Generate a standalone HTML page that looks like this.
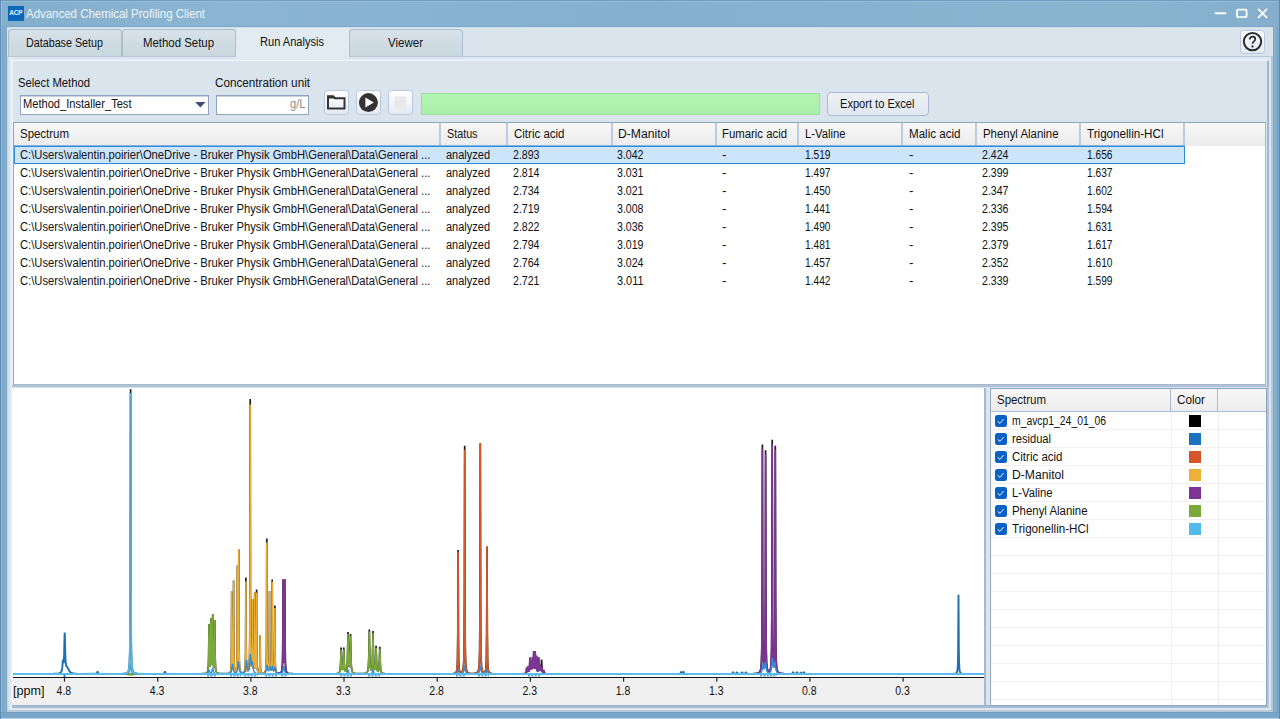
<!DOCTYPE html>
<html><head><meta charset="utf-8"><title>Advanced Chemical Profiling Client</title>
<style>
html,body{margin:0;padding:0;}
body{width:1280px;height:719px;overflow:hidden;position:relative;background:#86afce;font-family:"Liberation Sans", sans-serif;}
.t{position:absolute;white-space:pre;line-height:16px;transform-origin:0 0;font-family:"Liberation Sans", sans-serif;}
</style></head><body>
<div style="position:absolute;left:0px;top:0px;width:1280px;height:719px;background:linear-gradient(90deg,#84afcc 0%,#8bb5d2 18%,#86b1ce 50%,#8ab5d1 88%,#84aecb 100%);"></div>
<div style="position:absolute;left:0px;top:1px;width:1280px;height:1px;background:rgba(255,255,255,0.13);"></div>
<div style="position:absolute;left:0px;top:26px;width:1px;height:693px;background:#5f8eb5;"></div><div style="position:absolute;left:1px;top:26px;width:1px;height:693px;background:#8fb8d3;"></div><div style="position:absolute;left:2px;top:26px;width:1px;height:693px;background:#7ba7c9;"></div><div style="position:absolute;left:3px;top:26px;width:1px;height:693px;background:#7ea9ca;"></div><div style="position:absolute;left:4px;top:26px;width:1px;height:693px;background:#82adcd;"></div><div style="position:absolute;left:5px;top:26px;width:1px;height:693px;background:#86b0ce;"></div><div style="position:absolute;left:6px;top:26px;width:1px;height:693px;background:#7ca4c4;"></div>
<div style="position:absolute;left:1273px;top:26px;width:1px;height:693px;background:#77a4c7;"></div><div style="position:absolute;left:1274px;top:26px;width:1px;height:693px;background:#89b4d0;"></div><div style="position:absolute;left:1275px;top:26px;width:1px;height:693px;background:#88b2cf;"></div><div style="position:absolute;left:1276px;top:26px;width:1px;height:693px;background:#7aa6c9;"></div><div style="position:absolute;left:1277px;top:26px;width:1px;height:693px;background:#7aa6c9;"></div><div style="position:absolute;left:1278px;top:26px;width:1px;height:693px;background:#7ba7c9;"></div><div style="position:absolute;left:1279px;top:26px;width:1px;height:693px;background:#5a88b0;"></div>
<div style="position:absolute;left:0px;top:712px;width:1280px;height:7px;background:linear-gradient(180deg,#6f9cc0 0,#6f9cc0 1px,#7aa6c9 1px,#7aa6c9 5px,#80abcc 5px,#80abcc 6px,#b5cee2 6px,#b5cee2 7px);"></div>
<div style="position:absolute;left:0px;top:0px;width:1280px;height:1px;background:#6f9cc0;"></div>
<div style="position:absolute;left:0px;top:0px;width:1px;height:719px;background:#5f8db5;"></div>
<div style="position:absolute;left:1px;top:1px;width:1px;height:25px;background:#98bdd8;"></div>
<div style="position:absolute;left:1279px;top:0px;width:1px;height:719px;background:#5a88b0;"></div>
<div style="position:absolute;left:8px;top:6px;width:16px;height:15px;background:#0a6ab9;"><span class="t" style="left:1.2px;top:0.7px;font-size:6.5px;line-height:12px;color:#e8f0f8;letter-spacing:-0.2px;font-weight:bold">ACP</span></div>
<span class="t" style="left:26.30px;top:5.87px;font-size:12.5px;color:#eef5fa;transform:scaleX(0.9168);">Advanced Chemical Profiling Client</span>
<svg style="position:absolute;left:1210px;top:4px" width="64" height="20" viewBox="1210 4 64 20"><path d="M1215.5 13.2h10" stroke="#fbfdfe" stroke-width="1.9" stroke-linecap="round"/><rect x="1237" y="9.6" width="9.6" height="7.6" rx="1" fill="none" stroke="#fbfdfe" stroke-width="1.8"/><path d="M1258.6 9.4l8 8M1266.6 9.4l-8 8" stroke="#fbfdfe" stroke-width="1.8" stroke-linecap="round"/></svg>
<div style="position:absolute;left:7px;top:27px;width:1266px;height:685px;background:#dae4ed;"></div>
<div style="position:absolute;left:7px;top:26px;width:1266px;height:1px;background:#7ca7c8;"></div>
<div style="position:absolute;left:7px;top:27px;width:1266px;height:1px;background:#d3e0ea;"></div>
<div style="position:absolute;left:7px;top:56px;width:1266px;height:656px;box-sizing:border-box;background:#dde6ef;border-top:1px solid #b9cad8;border-right:2px solid #b6c8d8;border-bottom:2px solid #b8cad9;border-left:1px solid #c5d5e2;"></div>
<div style="position:absolute;left:8px;top:57px;width:1px;height:653px;background:#d4e0eb;"></div><div style="position:absolute;left:9px;top:57px;width:1px;height:653px;background:#dbe5ee;"></div><div style="position:absolute;left:10px;top:57px;width:1px;height:653px;background:#e2eaf2;"></div><div style="position:absolute;left:11px;top:57px;width:1px;height:653px;background:#e9eff5;"></div>
<div style="position:absolute;left:8px;top:29px;width:114px;height:28px;box-sizing:border-box;border:1px solid #adbdca;border-bottom:1px solid #b8c7d3;border-radius:4px 4px 0 0;background:linear-gradient(180deg,#d7e1e9 0,#d0dce4 50%,#c9d7df 100%);"></div><span class="t" style="left:26.30px;top:35.03px;font-size:12px;color:#111;transform:scaleX(0.8947);">Database Setup</span>
<div style="position:absolute;left:122px;top:29px;width:114px;height:28px;box-sizing:border-box;border:1px solid #adbdca;border-bottom:1px solid #b8c7d3;border-radius:4px 4px 0 0;background:linear-gradient(180deg,#d7e1e9 0,#d0dce4 50%,#c9d7df 100%);"></div><span class="t" style="left:143.30px;top:35.03px;font-size:12px;color:#111;transform:scaleX(0.9502);">Method Setup</span>
<div style="position:absolute;left:349px;top:29px;width:114px;height:28px;box-sizing:border-box;border:1px solid #adbdca;border-bottom:1px solid #b8c7d3;border-radius:4px 4px 0 0;background:linear-gradient(180deg,#d7e1e9 0,#d0dce4 50%,#c9d7df 100%);"></div><span class="t" style="left:388.30px;top:35.03px;font-size:12px;color:#111;transform:scaleX(0.9597);">Viewer</span>
<div style="position:absolute;left:236px;top:28px;width:113px;height:33px;background:#e3ebf2;border-radius:4px 4px 0 0;"></div><span class="t" style="left:260.30px;top:33.63px;font-size:12px;color:#111;transform:scaleX(0.9225);">Run Analysis</span>
<div style="position:absolute;left:1240px;top:29.5px;width:24.5px;height:24.5px;box-sizing:border-box;border:1px solid #b9c8de;border-radius:3.5px;background:linear-gradient(180deg,#fbfcfe,#f0f3f8 45%,#e3e9f2);"></div>
<svg style="position:absolute;left:1240px;top:30px" width="24" height="24" viewBox="0 0 24 24"><circle cx="12.5" cy="11.6" r="8.7" fill="none" stroke="#2b2b2b" stroke-width="2"/><path d="M9.7 9.4c0-1.7 1.2-2.7 2.8-2.7 1.7 0 2.8 1 2.8 2.4 0 1.3-.8 1.9-1.6 2.5-.8.6-1.2 1-1.2 2.2" fill="none" stroke="#2b2b2b" stroke-width="1.7"/><circle cx="12.5" cy="16.4" r="1.1" fill="#2b2b2b"/></svg>
<div style="position:absolute;left:12px;top:60px;width:1257px;height:327px;background:#dae4ed;"></div>
<div style="position:absolute;left:12px;top:59px;width:1255px;height:1px;background:#e4ecf3;"></div>
<div style="position:absolute;left:12px;top:60px;width:1255px;height:1px;background:#f0f4f8;"></div>
<div style="position:absolute;left:12px;top:61px;width:1px;height:324px;background:#eef3f8;"></div>
<div style="position:absolute;left:1267px;top:61px;width:2px;height:326px;background:#9db9d3;"></div>
<span class="t" style="left:18.30px;top:75.03px;font-size:12px;color:#111;transform:scaleX(0.9385);">Select Method</span>
<span class="t" style="left:214.80px;top:75.03px;font-size:12px;color:#111;transform:scaleX(0.9753);">Concentration unit</span>
<div style="position:absolute;left:20px;top:95px;width:188.5px;height:20px;box-sizing:border-box;border:1px solid #8fa3c0;background:#fff;box-shadow:inset 0 1px 0 #c9d3e0;"></div>
<span class="t" style="left:23.30px;top:95.53px;font-size:12px;color:#111;transform:scaleX(0.9241);">Method_Installer_Test</span>
<svg style="position:absolute;left:194px;top:100px" width="13" height="9" viewBox="194 100 13 9"><path d="M195.2 102h10.3l-5.15 5.4z" fill="#3a4f77"/></svg>
<div style="position:absolute;left:216px;top:95px;width:93px;height:20px;box-sizing:border-box;border:1px solid #8fa3c0;background:#fff;box-shadow:inset 0 1px 0 #c9d3e0;"></div>
<span class="t" style="left:289.80px;top:95.53px;font-size:12px;color:#8d8d8d;transform:scaleX(0.9288);">g/L</span>
<div style="position:absolute;left:324px;top:90px;width:24.5px;height:24.5px;box-sizing:border-box;border:1px solid #b9c8de;border-radius:3.5px;background:linear-gradient(180deg,#fdfeff,#f3f6fa 45%,#e5eaf3);"></div>
<div style="position:absolute;left:356px;top:90px;width:24.5px;height:24.5px;box-sizing:border-box;border:1px solid #b9c8de;border-radius:3.5px;background:linear-gradient(180deg,#fdfeff,#f3f6fa 45%,#e5eaf3);"></div>
<div style="position:absolute;left:388px;top:90px;width:24.5px;height:24.5px;box-sizing:border-box;border:1px solid #b9c8de;border-radius:3.5px;background:linear-gradient(180deg,#fdfeff,#f3f6fa 45%,#e5eaf3);"></div>
<svg style="position:absolute;left:324px;top:90px" width="90" height="26" viewBox="324 90 90 26"><path d="M328 108.6V96.6h5.2l1.7 1.7h9.6v10.3z" fill="none" stroke="#333" stroke-width="2" stroke-linejoin="miter"/><path d="M327 95.6h6.6l1.6 1.7v1.2H327z" fill="#333"/><circle cx="368.4" cy="102.6" r="9.5" fill="#333"/><path d="M365.4 97.6l8.4 5-8.4 5z" fill="#fff"/><rect x="394.5" y="96.5" width="11.5" height="12" fill="#e9e9ea"/></svg>
<div style="position:absolute;left:420.5px;top:93px;width:399.5px;height:22px;box-sizing:border-box;border:1px solid #9cdd9e;background:linear-gradient(180deg,#b4f4b4,#a9efa9);"></div>
<div style="position:absolute;left:826.8px;top:92px;width:102px;height:23.5px;box-sizing:border-box;border:1px solid #aab9d2;border-radius:4px;background:linear-gradient(180deg,#eef2f7,#e0e7f1);"></div>
<span class="t" style="left:840.30px;top:95.53px;font-size:12px;color:#111;transform:scaleX(0.9231);">Export to Excel</span>
<div style="position:absolute;left:13px;top:122px;width:1253px;height:263px;box-sizing:border-box;border:1px solid #8fa6c3;border-bottom-color:#a9b6cf;border-right-color:#a5b6cf;background:#fff;"></div>
<div style="position:absolute;left:14px;top:123px;width:1251px;height:22px;background:linear-gradient(180deg,#f7f7f7,#f2f2f2 50%,#ececec);"></div>
<div style="position:absolute;left:14px;top:145px;width:1251px;height:1px;background:#e9edf2;"></div>
<span class="t" style="left:19.80px;top:126.33px;font-size:12px;color:#111;transform:scaleX(0.9541);">Spectrum</span>
<div style="position:absolute;left:439px;top:123px;width:2px;height:22px;background:#bccbdd;"></div>
<span class="t" style="left:446.80px;top:126.33px;font-size:12px;color:#111;transform:scaleX(0.8962);">Status</span>
<div style="position:absolute;left:506px;top:123px;width:2px;height:22px;background:#bccbdd;"></div>
<span class="t" style="left:513.80px;top:126.33px;font-size:12px;color:#111;transform:scaleX(0.9585);">Citric acid</span>
<div style="position:absolute;left:611px;top:123px;width:2px;height:22px;background:#bccbdd;"></div>
<span class="t" style="left:618.30px;top:126.33px;font-size:12px;color:#111;transform:scaleX(1.0125);">D-Manitol</span>
<div style="position:absolute;left:715px;top:123px;width:2px;height:22px;background:#bccbdd;"></div>
<span class="t" style="left:722.30px;top:126.33px;font-size:12px;color:#111;transform:scaleX(0.9463);">Fumaric acid</span>
<div style="position:absolute;left:797px;top:123px;width:2px;height:22px;background:#bccbdd;"></div>
<span class="t" style="left:804.80px;top:126.33px;font-size:12px;color:#111;transform:scaleX(0.9388);">L-Valine</span>
<div style="position:absolute;left:901px;top:123px;width:2px;height:22px;background:#bccbdd;"></div>
<span class="t" style="left:909.30px;top:126.33px;font-size:12px;color:#111;transform:scaleX(0.9652);">Malic acid</span>
<div style="position:absolute;left:975px;top:123px;width:2px;height:22px;background:#bccbdd;"></div>
<span class="t" style="left:982.80px;top:126.33px;font-size:12px;color:#111;transform:scaleX(0.9508);">Phenyl Alanine</span>
<div style="position:absolute;left:1079px;top:123px;width:2px;height:22px;background:#bccbdd;"></div>
<span class="t" style="left:1086.80px;top:126.33px;font-size:12px;color:#111;transform:scaleX(0.9693);">Trigonellin-HCl</span>
<div style="position:absolute;left:1183px;top:123px;width:2px;height:22px;background:#bccbdd;"></div>
<div style="position:absolute;left:14px;top:145px;width:1171px;height:1px;background:#86b4e2;"></div>
<div style="position:absolute;left:14px;top:146px;width:1171px;height:18px;box-sizing:border-box;border:1px solid #2e89d9;background:#cce5fb;"></div>
<span class="t" style="left:19.60px;top:147.23px;font-size:12px;color:#111;transform:scaleX(0.9354);">C:\Users\valentin.poirier\OneDrive - Bruker Physik GmbH\General\Data\General ...</span>
<span class="t" style="left:445.60px;top:147.23px;font-size:12px;color:#111;transform:scaleX(0.9158);">analyzed</span>
<span class="t" style="left:513.00px;top:147.23px;font-size:12px;color:#111;transform:scaleX(0.8824);">2.893</span>
<span class="t" style="left:617.10px;top:147.23px;font-size:12px;color:#111;transform:scaleX(0.8824);">3.042</span>
<span class="t" style="left:722.10px;top:147.23px;font-size:12px;color:#111;transform:scaleX(1.1250);">-</span>
<span class="t" style="left:805.00px;top:147.23px;font-size:12px;color:#111;transform:scaleX(0.8491);">1.519</span>
<span class="t" style="left:909.10px;top:147.23px;font-size:12px;color:#111;transform:scaleX(1.1250);">-</span>
<span class="t" style="left:981.90px;top:147.23px;font-size:12px;color:#111;transform:scaleX(0.8824);">2.424</span>
<span class="t" style="left:1086.50px;top:147.23px;font-size:12px;color:#111;transform:scaleX(0.8491);">1.656</span>
<span class="t" style="left:19.60px;top:165.23px;font-size:12px;color:#111;transform:scaleX(0.9354);">C:\Users\valentin.poirier\OneDrive - Bruker Physik GmbH\General\Data\General ...</span>
<span class="t" style="left:445.60px;top:165.23px;font-size:12px;color:#111;transform:scaleX(0.9158);">analyzed</span>
<span class="t" style="left:513.00px;top:165.23px;font-size:12px;color:#111;transform:scaleX(0.8824);">2.814</span>
<span class="t" style="left:617.10px;top:165.23px;font-size:12px;color:#111;transform:scaleX(0.8824);">3.031</span>
<span class="t" style="left:722.10px;top:165.23px;font-size:12px;color:#111;transform:scaleX(1.1250);">-</span>
<span class="t" style="left:805.00px;top:165.23px;font-size:12px;color:#111;transform:scaleX(0.8491);">1.497</span>
<span class="t" style="left:909.10px;top:165.23px;font-size:12px;color:#111;transform:scaleX(1.1250);">-</span>
<span class="t" style="left:981.90px;top:165.23px;font-size:12px;color:#111;transform:scaleX(0.8824);">2.399</span>
<span class="t" style="left:1086.50px;top:165.23px;font-size:12px;color:#111;transform:scaleX(0.8491);">1.637</span>
<span class="t" style="left:19.60px;top:183.23px;font-size:12px;color:#111;transform:scaleX(0.9354);">C:\Users\valentin.poirier\OneDrive - Bruker Physik GmbH\General\Data\General ...</span>
<span class="t" style="left:445.60px;top:183.23px;font-size:12px;color:#111;transform:scaleX(0.9158);">analyzed</span>
<span class="t" style="left:513.00px;top:183.23px;font-size:12px;color:#111;transform:scaleX(0.8824);">2.734</span>
<span class="t" style="left:617.10px;top:183.23px;font-size:12px;color:#111;transform:scaleX(0.8824);">3.021</span>
<span class="t" style="left:722.10px;top:183.23px;font-size:12px;color:#111;transform:scaleX(1.1250);">-</span>
<span class="t" style="left:805.00px;top:183.23px;font-size:12px;color:#111;transform:scaleX(0.8491);">1.450</span>
<span class="t" style="left:909.10px;top:183.23px;font-size:12px;color:#111;transform:scaleX(1.1250);">-</span>
<span class="t" style="left:981.90px;top:183.23px;font-size:12px;color:#111;transform:scaleX(0.8824);">2.347</span>
<span class="t" style="left:1086.50px;top:183.23px;font-size:12px;color:#111;transform:scaleX(0.8491);">1.602</span>
<span class="t" style="left:19.60px;top:201.23px;font-size:12px;color:#111;transform:scaleX(0.9354);">C:\Users\valentin.poirier\OneDrive - Bruker Physik GmbH\General\Data\General ...</span>
<span class="t" style="left:445.60px;top:201.23px;font-size:12px;color:#111;transform:scaleX(0.9158);">analyzed</span>
<span class="t" style="left:513.00px;top:201.23px;font-size:12px;color:#111;transform:scaleX(0.8824);">2.719</span>
<span class="t" style="left:617.10px;top:201.23px;font-size:12px;color:#111;transform:scaleX(0.8824);">3.008</span>
<span class="t" style="left:722.10px;top:201.23px;font-size:12px;color:#111;transform:scaleX(1.1250);">-</span>
<span class="t" style="left:805.00px;top:201.23px;font-size:12px;color:#111;transform:scaleX(0.8491);">1.441</span>
<span class="t" style="left:909.10px;top:201.23px;font-size:12px;color:#111;transform:scaleX(1.1250);">-</span>
<span class="t" style="left:981.90px;top:201.23px;font-size:12px;color:#111;transform:scaleX(0.8824);">2.336</span>
<span class="t" style="left:1086.50px;top:201.23px;font-size:12px;color:#111;transform:scaleX(0.8491);">1.594</span>
<span class="t" style="left:19.60px;top:219.23px;font-size:12px;color:#111;transform:scaleX(0.9354);">C:\Users\valentin.poirier\OneDrive - Bruker Physik GmbH\General\Data\General ...</span>
<span class="t" style="left:445.60px;top:219.23px;font-size:12px;color:#111;transform:scaleX(0.9158);">analyzed</span>
<span class="t" style="left:513.00px;top:219.23px;font-size:12px;color:#111;transform:scaleX(0.8824);">2.822</span>
<span class="t" style="left:617.10px;top:219.23px;font-size:12px;color:#111;transform:scaleX(0.8824);">3.036</span>
<span class="t" style="left:722.10px;top:219.23px;font-size:12px;color:#111;transform:scaleX(1.1250);">-</span>
<span class="t" style="left:805.00px;top:219.23px;font-size:12px;color:#111;transform:scaleX(0.8491);">1.490</span>
<span class="t" style="left:909.10px;top:219.23px;font-size:12px;color:#111;transform:scaleX(1.1250);">-</span>
<span class="t" style="left:981.90px;top:219.23px;font-size:12px;color:#111;transform:scaleX(0.8824);">2.395</span>
<span class="t" style="left:1086.50px;top:219.23px;font-size:12px;color:#111;transform:scaleX(0.8491);">1.631</span>
<span class="t" style="left:19.60px;top:237.23px;font-size:12px;color:#111;transform:scaleX(0.9354);">C:\Users\valentin.poirier\OneDrive - Bruker Physik GmbH\General\Data\General ...</span>
<span class="t" style="left:445.60px;top:237.23px;font-size:12px;color:#111;transform:scaleX(0.9158);">analyzed</span>
<span class="t" style="left:513.00px;top:237.23px;font-size:12px;color:#111;transform:scaleX(0.8824);">2.794</span>
<span class="t" style="left:617.10px;top:237.23px;font-size:12px;color:#111;transform:scaleX(0.8824);">3.019</span>
<span class="t" style="left:722.10px;top:237.23px;font-size:12px;color:#111;transform:scaleX(1.1250);">-</span>
<span class="t" style="left:805.00px;top:237.23px;font-size:12px;color:#111;transform:scaleX(0.8491);">1.481</span>
<span class="t" style="left:909.10px;top:237.23px;font-size:12px;color:#111;transform:scaleX(1.1250);">-</span>
<span class="t" style="left:981.90px;top:237.23px;font-size:12px;color:#111;transform:scaleX(0.8824);">2.379</span>
<span class="t" style="left:1086.50px;top:237.23px;font-size:12px;color:#111;transform:scaleX(0.8491);">1.617</span>
<span class="t" style="left:19.60px;top:255.23px;font-size:12px;color:#111;transform:scaleX(0.9354);">C:\Users\valentin.poirier\OneDrive - Bruker Physik GmbH\General\Data\General ...</span>
<span class="t" style="left:445.60px;top:255.23px;font-size:12px;color:#111;transform:scaleX(0.9158);">analyzed</span>
<span class="t" style="left:513.00px;top:255.23px;font-size:12px;color:#111;transform:scaleX(0.8824);">2.764</span>
<span class="t" style="left:617.10px;top:255.23px;font-size:12px;color:#111;transform:scaleX(0.8824);">3.024</span>
<span class="t" style="left:722.10px;top:255.23px;font-size:12px;color:#111;transform:scaleX(1.1250);">-</span>
<span class="t" style="left:805.00px;top:255.23px;font-size:12px;color:#111;transform:scaleX(0.8491);">1.457</span>
<span class="t" style="left:909.10px;top:255.23px;font-size:12px;color:#111;transform:scaleX(1.1250);">-</span>
<span class="t" style="left:981.90px;top:255.23px;font-size:12px;color:#111;transform:scaleX(0.8824);">2.352</span>
<span class="t" style="left:1086.50px;top:255.23px;font-size:12px;color:#111;transform:scaleX(0.8491);">1.610</span>
<span class="t" style="left:19.60px;top:273.23px;font-size:12px;color:#111;transform:scaleX(0.9354);">C:\Users\valentin.poirier\OneDrive - Bruker Physik GmbH\General\Data\General ...</span>
<span class="t" style="left:445.60px;top:273.23px;font-size:12px;color:#111;transform:scaleX(0.9158);">analyzed</span>
<span class="t" style="left:513.00px;top:273.23px;font-size:12px;color:#111;transform:scaleX(0.8824);">2.721</span>
<span class="t" style="left:617.10px;top:273.23px;font-size:12px;color:#111;transform:scaleX(0.9094);">3.011</span>
<span class="t" style="left:722.10px;top:273.23px;font-size:12px;color:#111;transform:scaleX(1.1250);">-</span>
<span class="t" style="left:805.00px;top:273.23px;font-size:12px;color:#111;transform:scaleX(0.8491);">1.442</span>
<span class="t" style="left:909.10px;top:273.23px;font-size:12px;color:#111;transform:scaleX(1.1250);">-</span>
<span class="t" style="left:981.90px;top:273.23px;font-size:12px;color:#111;transform:scaleX(0.8824);">2.339</span>
<span class="t" style="left:1086.50px;top:273.23px;font-size:12px;color:#111;transform:scaleX(0.8491);">1.599</span>
<div style="position:absolute;left:12px;top:385px;width:1257px;height:1px;background:#b8c8da;"></div>
<div style="position:absolute;left:12px;top:386px;width:1257px;height:1px;background:#a3bed5;"></div>
<div style="position:absolute;left:12px;top:387px;width:1257px;height:321px;background:#fff;"></div>
<div style="position:absolute;left:12px;top:387px;width:1255px;height:1px;background:#dde7f0;"></div>
<div style="position:absolute;left:13px;top:388px;width:1254px;height:1px;background:#f4f7fa;"></div>
<div style="position:absolute;left:12px;top:388px;width:1px;height:317px;background:#f4f7fa;"></div>
<div style="position:absolute;left:13px;top:388px;width:971px;height:290px;background:#fff;"></div>
<div style="position:absolute;left:13px;top:388px;width:971px;height:1px;background:#f3f6fa;"></div>
<div style="position:absolute;left:13px;top:678px;width:971px;height:27px;background:#f0f0f0;"></div>
<svg style="position:absolute;left:13px;top:388px" width="971" height="317" viewBox="13 388 971 317" font-family="Liberation Sans, sans-serif" font-size="12">
<g fill="none" stroke-linejoin="bevel" stroke-linecap="butt">
<path d="M13.00 674.0L120.10 673.9L123.90 673.6L125.10 673.5L126.10 673.2L126.80 672.9L127.40 672.5L127.90 671.9L128.30 671.1L128.80 669.4L129.10 667.6L129.40 664.4L129.60 660.7L129.90 649.4L130.10 631.1L130.30 583.0L130.60 389.2L130.90 583.0L131.10 631.1L131.30 649.4L131.60 660.7L131.90 665.7L132.20 668.3L132.60 670.3L133.20 671.7L134.00 672.7L135.10 673.2L136.90 673.6L141.20 673.9L141.30 674.0L199.90 673.9L202.80 673.7L204.70 673.6L206.00 673.3L206.80 672.9L207.20 672.4L207.50 672.0L207.90 670.7L208.20 668.7L208.40 665.8L208.70 653.4L209.00 624.0L209.30 652.6L209.50 662.0L209.80 666.0L209.90 666.3L210.00 666.2L210.20 664.8L210.40 660.7L210.60 650.1L210.90 618.0L211.30 656.3L211.60 663.9L211.80 664.7L212.00 663.6L212.20 659.5L212.40 648.3L212.70 614.0L213.10 655.8L213.30 662.9L213.50 665.8L213.70 666.9L213.80 667.0L213.90 666.8L214.10 665.4L214.40 657.6L214.80 620.0L215.20 658.4L215.50 667.1L215.70 669.3L216.00 671.0L216.40 672.0L217.00 672.8L217.90 673.2L219.20 673.5L222.60 673.7L226.70 673.6L228.70 673.3L229.30 673.1L229.80 672.7L230.20 672.2L230.50 671.6L230.90 669.6L231.10 667.4L231.30 661.9L231.50 642.7L231.70 591.6L231.90 642.4L232.10 661.1L232.30 666.0L232.54 667.7L232.60 667.8L232.70 667.7L232.90 666.6L233.10 663.3L233.30 652.7L233.40 638.2L233.60 580.5L233.80 638.5L234.00 660.1L234.20 666.2L234.50 669.4L234.70 670.3L235.00 671.0L235.40 671.3L235.80 671.1L236.10 670.5L236.30 669.8L236.60 667.7L236.80 664.7L237.00 657.5L237.20 632.4L237.40 565.5L237.70 647.7L237.80 655.2L238.00 660.5L238.10 660.9L238.20 660.1L238.35 656.1L238.57 633.0L238.80 549.4L239.10 646.1L239.30 660.8L239.60 667.4L239.90 669.8L240.40 671.5L240.80 672.1L241.20 672.5L241.70 672.7L242.30 672.8L243.00 672.8L243.60 672.6L244.00 672.3L244.40 671.8L244.70 671.1L244.90 670.3L245.20 667.9L245.40 664.0L245.60 652.7L245.90 577.6L246.10 637.5L246.35 662.1L246.57 667.2L246.90 669.8L247.20 670.6L247.50 671.0L247.90 670.9L248.30 670.3L248.70 669.0L249.00 667.0L249.40 660.9L249.60 653.5L249.80 635.4L250.00 571.2L250.20 399.0L250.46 600.7L250.60 635.1L250.90 657.3L251.20 663.8L251.40 665.6L251.60 666.4L251.70 666.5L251.80 666.4L252.00 665.1L252.20 660.8L252.40 644.1L252.60 598.9L252.80 644.4L253.00 661.4L253.20 666.0L253.40 667.7L253.60 668.3L253.70 668.3L253.80 668.1L254.10 665.9L254.30 660.8L254.40 654.8L254.70 592.6L254.90 642.3L255.10 660.8L255.30 665.7L255.50 667.4L255.60 667.7L255.70 667.7L255.80 667.4L256.00 665.7L256.20 660.6L256.30 654.4L256.60 589.5L256.80 641.8L257.00 661.3L257.20 666.9L257.40 669.2L257.80 671.1L258.10 671.7L258.50 672.0L258.80 672.0L259.00 671.9L259.30 671.3L259.50 670.4L259.70 667.9L259.90 659.1L260.10 635.4L260.40 665.2L260.60 669.7L260.80 671.2L261.20 672.4L261.50 672.7L262.00 673.0L262.70 673.1L263.50 673.0L264.20 672.8L264.70 672.4L265.20 671.7L265.60 670.4L265.90 668.5L266.10 665.9L266.30 660.4L266.50 644.5L266.80 538.4L267.00 623.0L267.15 650.2L267.30 660.0L267.50 665.4L267.80 668.5L268.00 669.3L268.20 669.7L268.40 669.6L268.50 669.4L268.80 667.7L269.10 661.3L269.30 642.2L269.50 591.0L269.70 642.3L269.93 662.6L270.20 667.9L270.40 669.3L270.60 670.0L270.70 670.1L270.90 670.2L271.20 669.6L271.40 668.4L271.60 666.0L271.80 660.0L271.90 652.9L272.20 579.5L272.48 650.8L272.65 662.2L272.80 666.2L273.00 668.6L273.20 669.8L273.50 670.6L273.70 670.6L273.80 670.6L274.00 670.1L274.30 668.0L274.50 663.7L274.70 647.9L274.90 605.6L275.15 654.5L275.30 664.0L275.60 669.6L276.00 671.6L276.30 672.3L276.60 672.6L277.00 672.9L277.60 673.1L278.40 673.2L279.20 673.2L280.40 672.8L280.80 672.5L281.20 672.1L281.70 670.9L282.10 668.8L282.30 666.7L282.50 662.5L282.70 653.0L283.10 579.5L283.50 651.4L283.70 659.8L283.84 661.9L283.90 662.3L283.95 662.3L284.00 662.2L284.20 659.8L284.30 656.7L284.50 641.7L284.80 579.0L285.10 642.9L285.40 662.5L285.60 666.7L286.00 670.2L286.30 671.3L286.60 672.0L287.00 672.6L287.60 673.0L288.40 673.3L289.60 673.6L291.60 673.7L294.70 673.9L294.80 674.0L331.90 673.9L336.30 673.6L337.50 673.5L338.40 673.2L339.20 672.6L339.70 671.7L340.00 670.6L340.30 668.5L340.60 663.8L341.10 647.5L341.60 663.3L341.80 666.7L342.10 669.0L342.40 669.7L342.60 669.5L342.70 669.3L342.90 668.4L343.10 666.6L343.40 660.6L343.80 647.5L344.30 663.4L344.60 668.0L344.80 669.5L345.10 670.6L345.50 671.2L345.70 671.3L346.00 671.2L346.40 670.5L346.80 669.0L347.10 666.5L347.30 663.3L347.60 653.2L348.00 631.9L348.60 660.1L348.90 665.1L349.20 666.6L349.30 666.6L349.40 666.4L349.60 665.3L349.90 660.7L350.50 634.1L350.90 654.4L351.20 664.1L351.60 669.0L351.90 670.6L352.20 671.5L352.70 672.4L353.40 672.9L354.40 673.3L355.80 673.5L359.00 673.7L362.80 673.6L365.00 673.4L366.30 673.0L367.10 672.3L367.70 671.1L368.10 669.3L368.40 666.6L368.80 657.1L369.30 629.5L369.70 652.1L370.00 662.7L370.40 667.9L370.70 669.3L370.90 669.8L371.10 670.0L371.30 669.9L371.50 669.6L371.80 668.5L372.10 666.1L372.30 662.9L372.60 652.7L373.00 630.9L373.50 657.1L373.70 662.9L374.00 667.0L374.30 668.8L374.50 669.3L374.70 669.4L375.00 669.0L375.30 667.2L375.60 662.5L376.10 645.8L376.50 659.9L376.80 666.6L377.20 669.8L377.50 670.8L377.90 671.3L378.10 671.3L378.30 671.1L378.60 670.4L378.90 669.0L379.10 667.0L379.40 660.5L379.80 646.8L380.30 663.6L380.70 669.4L381.00 671.1L381.40 672.2L382.00 672.9L382.80 673.3L384.80 673.7L388.70 673.9L388.80 674.0L448.40 673.9L453.10 673.6L454.40 673.4L455.30 673.0L455.90 672.5L456.30 671.8L456.60 671.0L456.90 669.6L457.30 665.2L457.50 659.9L457.80 634.2L458.10 550.0L458.40 634.1L458.60 655.0L458.80 662.9L459.10 667.8L459.40 669.9L459.70 671.0L460.10 671.7L460.70 672.2L461.40 672.2L462.10 671.7L462.60 670.9L463.00 669.6L463.50 666.0L463.90 658.0L464.10 648.2L464.40 600.9L464.70 445.7L465.10 625.3L465.30 648.3L465.50 658.1L465.70 663.2L466.00 667.2L466.40 669.8L467.00 671.5L467.40 672.1L467.80 672.5L468.60 673.0L469.70 673.3L471.20 673.5L473.00 673.5L474.60 673.4L475.80 673.2L476.70 672.8L477.40 672.3L478.00 671.5L478.50 670.1L478.80 668.6L479.10 666.0L479.50 657.9L479.70 648.0L480.00 600.0L480.30 442.9L480.60 600.0L480.90 647.9L481.10 657.8L481.50 665.9L481.80 668.5L482.10 670.0L482.60 671.3L483.20 672.0L483.60 672.2L484.00 672.3L484.40 672.2L484.70 672.0L485.20 671.4L485.60 670.3L485.90 668.5L486.10 666.4L486.40 659.4L486.70 633.0L487.00 546.5L487.30 633.1L487.60 659.5L487.90 666.6L488.30 670.1L488.60 671.2L489.00 672.1L489.50 672.7L490.10 673.1L490.90 673.4L492.00 673.6L496.90 673.9L497.00 674.0L522.00 673.9L524.20 673.7L525.30 673.4L525.60 673.2L525.90 672.9L526.20 672.0L526.70 667.5L527.20 671.4L527.40 671.7L527.60 671.4L527.80 670.4L528.20 666.0L528.70 670.8L528.90 671.3L529.10 671.1L529.20 670.9L529.50 668.4L529.90 657.5L530.20 666.1L530.30 667.8L530.50 669.3L530.60 669.4L530.70 669.1L530.80 668.3L531.20 660.0L531.60 668.2L531.80 669.1L532.00 668.5L532.20 665.7L532.50 657.0L532.80 665.1L532.90 666.6L533.00 667.3L533.10 667.4L533.30 665.5L533.40 663.1L533.70 651.3L534.10 665.8L534.20 667.3L534.40 668.5L534.50 668.5L534.60 668.1L534.80 665.8L535.20 651.3L535.60 665.9L535.70 667.4L535.90 668.6L536.00 668.5L536.10 668.0L536.20 667.0L536.60 655.8L537.00 667.8L537.20 670.0L537.50 671.2L537.70 671.3L537.90 671.1L538.20 669.5L538.40 666.3L538.70 657.3L539.10 668.1L539.40 670.3L539.50 670.4L539.60 670.2L539.80 669.2L540.20 664.0L540.60 669.0L540.80 669.8L540.90 669.8L541.00 669.5L541.20 667.7L541.60 659.5L542.00 668.1L542.20 670.3L542.50 671.5L542.70 671.7L542.90 671.5L543.35 670.2L543.50 670.0L544.20 672.5L544.70 673.2L545.60 673.6L548.20 673.9L548.30 674.0L748.50 673.9L753.20 673.7L756.10 673.5L758.00 673.0L758.70 672.7L759.20 672.4L759.90 671.5L760.40 670.4L760.80 668.8L761.10 666.6L761.50 660.3L761.80 647.5L762.10 600.0L762.40 444.6L762.70 599.5L762.90 637.8L763.20 656.0L763.40 660.7L763.70 663.9L763.90 664.7L764.00 664.8L764.10 664.7L764.40 663.2L764.60 660.8L764.80 656.3L765.10 638.5L765.35 583.1L765.60 450.2L765.90 601.5L766.20 647.8L766.50 660.2L766.70 664.0L767.00 667.1L767.30 668.8L767.80 670.3L768.40 671.0L768.80 671.1L769.20 671.1L769.70 670.7L770.20 669.7L770.60 668.1L770.90 666.0L771.30 659.6L771.60 646.6L771.90 598.2L772.20 439.7L772.54 609.4L772.70 636.8L773.00 655.4L773.20 660.1L773.50 663.3L773.70 664.0L773.80 664.0L773.90 663.8L774.20 661.8L774.40 658.5L774.60 652.0L774.80 637.8L775.04 585.4L775.30 445.7L775.60 600.2L775.90 647.5L776.10 657.4L776.50 665.5L776.80 668.2L777.10 669.7L777.60 671.2L778.20 672.1L778.70 672.5L779.30 672.9L780.10 673.2L781.10 673.4L784.10 673.7L789.30 673.9L789.40 674.0L984.00 674.0" stroke="#1e1e1e" stroke-width="1.7"/>
<path d="M13.00 674.0L52.90 673.8L56.00 673.7L58.10 673.4L59.60 673.1L60.60 672.5L61.10 672.0L61.50 671.3L62.00 669.6L62.30 667.4L62.90 660.0L62.97 660.0L63.05 660.3L63.40 662.7L63.50 662.9L63.60 662.6L63.70 662.1L63.90 659.6L64.10 655.1L64.55 635.7L64.70 632.5L64.85 635.6L65.40 657.6L65.80 663.5L66.00 664.8L66.30 665.9L66.60 666.4L67.50 667.4L68.80 670.1L69.40 671.1L70.20 672.0L71.10 672.6L72.40 673.1L74.20 673.5L77.00 673.7L81.40 673.9L81.50 674.0L95.70 673.8L96.40 673.6L96.80 673.3L97.60 671.5L97.75 671.7L98.20 673.0L98.50 673.4L98.90 673.7L99.90 673.9L100.00 674.0L162.80 673.9L163.60 673.7L164.10 673.3L164.90 671.5L165.70 673.3L166.10 673.6L167.00 673.9L167.10 674.0L679.20 673.9L679.90 673.7L680.30 673.3L680.50 673.0L681.00 671.5L681.60 673.1L681.90 673.4L682.20 673.5L682.60 673.4L682.90 673.1L683.40 671.6L683.52 671.5L683.90 672.7L684.20 673.3L684.50 673.6L685.30 673.9L685.40 674.0L731.40 673.9L731.90 673.7L732.30 673.5L733.00 672.0L733.70 673.5L734.20 673.7L735.00 673.8L735.80 673.7L736.30 673.5L737.02 672.0L737.40 673.0L737.70 673.5L738.10 673.7L738.80 673.9L738.90 674.0L740.50 673.8L741.10 673.6L741.50 673.2L742.00 672.0L742.70 673.5L743.20 673.7L744.00 673.8L744.80 673.7L745.30 673.5L746.02 672.0L746.40 673.0L746.70 673.5L747.10 673.7L747.60 673.9L747.70 674.0L791.40 673.9L791.90 673.7L792.30 673.5L793.00 672.0L793.70 673.5L794.20 673.7L795.00 673.8L795.80 673.7L796.30 673.5L797.00 672.0L797.60 673.3L797.90 673.6L798.20 673.7L799.30 673.8L800.10 673.6L800.50 673.2L801.00 672.0L801.50 673.2L801.70 673.4L802.20 673.7L802.80 673.7L803.10 673.6L803.40 673.3L804.00 672.0L804.70 673.5L805.10 673.7L805.60 673.9L805.70 674.0L953.60 673.8L954.80 673.6L955.60 673.4L956.20 673.1L956.70 672.5L957.00 671.9L957.30 670.9L957.70 667.7L957.90 663.7L958.10 654.7L958.50 594.8L958.80 645.4L959.00 660.2L959.30 667.7L959.60 670.4L959.90 671.7L960.40 672.7L961.10 673.3L962.30 673.7L964.30 673.9L964.40 674.0L984.00 674.0" stroke="#1f6fb5" stroke-width="1.9"/>
<path d="M13.00 674.0L449.00 673.9L452.40 673.7L454.40 673.4L455.30 673.0L455.90 672.5L456.40 671.6L456.70 670.7L457.00 669.0L457.20 666.9L457.50 660.1L457.80 634.8L458.10 552.0L458.40 634.8L458.70 660.0L459.00 666.8L459.20 668.8L459.50 670.4L459.80 671.3L460.30 672.0L460.90 672.3L461.60 672.2L462.20 671.6L462.70 670.7L463.10 669.2L463.40 667.2L463.80 661.2L464.10 648.7L464.40 602.2L464.70 449.7L465.10 626.1L465.30 648.7L465.50 658.4L465.70 663.4L466.00 667.3L466.40 669.8L466.90 671.4L467.30 672.1L467.70 672.5L468.30 672.9L469.10 673.2L470.10 673.4L471.40 673.5L473.10 673.5L474.60 673.4L475.70 673.2L476.60 672.9L477.50 672.2L478.10 671.3L478.60 669.7L478.90 667.9L479.20 664.7L479.40 660.8L479.70 648.0L480.00 600.0L480.30 442.9L480.60 600.0L480.90 647.9L481.20 660.8L481.60 667.0L481.90 669.1L482.30 670.6L482.80 671.6L483.50 672.2L484.20 672.3L484.80 671.9L485.30 671.2L485.60 670.3L485.90 668.6L486.10 666.4L486.40 659.4L486.70 633.0L487.00 546.5L487.30 633.1L487.60 659.5L487.90 666.6L488.10 668.8L488.40 670.5L488.80 671.8L489.30 672.5L490.00 673.1L490.90 673.4L492.90 673.7L496.30 673.9L496.40 674.0L984.00 674.0" stroke="#d55a2a" stroke-width="1.6"/>
<path d="M13.00 674.0L223.10 673.9L227.10 673.7L228.30 673.5L229.10 673.2L229.60 672.9L230.00 672.6L230.30 672.1L230.60 671.3L231.00 668.8L231.20 665.4L231.40 655.7L231.50 642.8L231.70 591.6L231.90 642.4L232.10 661.1L232.30 666.1L232.46 667.5L232.65 667.8L232.80 667.4L233.00 665.4L233.20 659.6L233.30 652.7L233.60 580.5L233.80 638.5L234.00 660.1L234.20 666.2L234.50 669.4L234.70 670.4L235.00 671.1L235.30 671.3L235.60 671.3L235.90 671.0L236.20 670.2L236.60 667.7L236.80 664.7L237.00 657.6L237.20 632.5L237.40 565.5L237.70 647.7L237.80 655.2L238.00 660.6L238.10 660.9L238.20 660.1L238.35 656.1L238.57 633.0L238.80 549.4L239.10 646.2L239.30 660.8L239.60 667.4L239.90 669.8L240.40 671.5L240.70 672.0L241.10 672.4L241.60 672.7L242.20 672.9L242.90 672.9L243.50 672.7L244.00 672.4L244.40 671.9L244.70 671.2L244.90 670.5L245.20 668.2L245.40 664.4L245.60 653.6L245.90 581.6L246.10 639.0L246.35 662.5L246.52 666.7L246.80 669.4L247.00 670.3L247.30 670.9L247.60 671.1L248.00 670.9L248.40 670.2L248.80 668.6L249.10 666.2L249.30 663.4L249.60 653.9L249.80 636.2L250.00 573.2L250.20 404.5L250.46 602.2L250.60 635.9L250.90 657.7L251.20 664.0L251.40 665.8L251.60 666.6L251.70 666.6L251.80 666.5L252.00 665.2L252.20 660.8L252.40 644.2L252.60 598.9L252.80 644.5L253.00 661.4L253.20 666.1L253.40 667.8L253.60 668.3L253.70 668.3L253.80 668.1L254.10 665.9L254.30 660.9L254.40 654.9L254.70 592.6L254.90 642.4L255.10 660.8L255.30 665.8L255.50 667.5L255.60 667.8L255.70 667.8L255.80 667.6L256.00 666.0L256.20 661.1L256.30 655.1L256.60 592.5L256.80 642.9L257.00 661.8L257.20 667.2L257.40 669.4L257.80 671.2L258.10 671.8L258.50 672.1L258.80 672.1L259.00 672.0L259.30 671.4L259.50 670.4L259.70 668.0L259.90 659.2L260.10 635.4L260.40 665.2L260.60 669.7L260.80 671.3L261.20 672.4L261.50 672.7L262.00 673.0L262.70 673.1L263.50 673.1L264.20 672.8L264.70 672.5L265.20 671.8L265.60 670.6L265.90 668.7L266.10 666.2L266.30 660.8L266.50 645.4L266.80 542.4L267.07 640.5L267.30 660.5L267.60 667.0L267.80 668.7L268.00 669.5L268.10 669.7L268.30 669.8L268.60 669.2L268.90 666.6L269.10 661.3L269.30 642.3L269.50 591.0L269.70 642.3L269.93 662.7L270.20 668.0L270.40 669.4L270.60 670.1L270.70 670.3L270.90 670.3L271.20 669.7L271.40 668.6L271.60 666.3L271.80 660.3L271.90 653.4L272.20 581.5L272.46 648.9L272.60 660.4L272.80 666.4L273.00 668.8L273.20 670.0L273.50 670.8L273.70 670.8L273.80 670.8L274.00 670.3L274.20 669.3L274.50 664.1L274.70 649.0L274.90 608.1L275.15 655.3L275.40 667.2L275.70 670.6L276.10 672.1L276.40 672.7L276.80 673.0L277.40 673.4L278.20 673.6L279.80 673.7L282.50 673.9L282.60 674.0L984.00 674.0" stroke="#eaae35" stroke-width="1.5"/>
<path d="M13.00 674.0L275.50 673.9L278.20 673.7L279.80 673.3L280.50 673.0L281.10 672.4L281.50 671.7L281.80 670.7L282.20 668.1L282.50 662.7L282.80 643.1L283.10 579.5L283.50 651.5L283.65 658.6L283.80 661.6L283.90 662.4L283.95 662.5L284.00 662.4L284.20 659.9L284.50 641.8L284.80 579.0L285.10 643.0L285.30 658.9L285.50 665.1L285.80 669.0L286.10 670.7L286.40 671.7L286.80 672.4L287.30 672.9L288.00 673.3L288.90 673.5L290.30 673.7L292.40 673.9L292.50 674.0L522.60 673.9L523.80 673.8L524.70 673.6L525.30 673.5L525.70 673.2L526.00 672.7L526.30 671.4L526.70 667.5L527.10 670.9L527.30 671.6L527.40 671.7L527.50 671.6L527.80 670.4L528.20 666.0L528.60 670.2L528.80 671.1L528.90 671.3L529.10 671.2L529.30 670.4L529.50 668.4L529.90 657.5L530.20 666.1L530.30 667.8L530.50 669.3L530.60 669.4L530.70 669.1L530.80 668.3L531.20 660.0L531.60 668.2L531.80 669.2L532.00 668.5L532.20 665.7L532.50 657.0L532.80 665.1L532.90 666.7L533.00 667.3L533.10 667.4L533.30 665.5L533.40 663.1L533.70 651.3L534.10 665.8L534.20 667.3L534.40 668.5L534.50 668.5L534.60 668.2L534.80 665.8L535.20 651.3L535.60 665.9L535.70 667.4L535.90 668.6L536.00 668.5L536.10 668.1L536.20 667.0L536.60 655.8L537.00 667.8L537.20 670.1L537.50 671.2L537.70 671.4L537.90 671.1L538.20 669.6L538.40 666.4L538.70 657.3L539.10 668.2L539.40 670.3L539.50 670.5L539.60 670.3L539.80 669.3L540.20 664.0L540.60 669.5L540.90 670.9L541.00 670.9L541.10 670.7L541.20 670.3L541.60 666.5L542.00 670.7L542.20 671.7L542.40 672.1L542.50 672.2L542.70 672.2L542.90 671.9L543.35 670.3L543.50 670.0L544.10 672.2L544.60 673.2L544.90 673.4L545.40 673.6L547.60 673.9L547.70 674.0L748.70 673.9L754.60 673.6L756.40 673.4L757.70 673.2L758.90 672.6L759.70 671.9L760.30 670.8L760.70 669.4L761.00 667.6L761.30 664.4L761.70 653.7L761.90 639.2L762.10 601.2L762.40 448.6L762.70 600.8L762.90 638.5L763.20 656.3L763.40 660.9L763.70 664.1L763.90 664.8L764.00 664.9L764.10 664.8L764.40 663.4L764.60 661.1L764.80 656.6L765.10 639.2L765.35 584.7L765.60 454.2L765.90 602.8L766.20 648.3L766.50 660.5L766.70 664.2L767.00 667.2L767.30 668.9L767.80 670.3L768.40 671.0L768.70 671.2L769.10 671.2L769.70 670.7L770.20 669.8L770.60 668.2L770.90 666.1L771.30 659.9L771.60 647.1L771.90 599.5L772.20 443.7L772.54 610.5L772.70 637.5L773.00 655.7L773.20 660.4L773.50 663.5L773.70 664.2L773.80 664.2L773.90 664.0L774.20 662.0L774.40 658.8L774.60 652.4L774.80 638.4L775.04 587.0L775.30 449.7L775.60 601.5L775.90 648.0L776.10 657.7L776.50 665.7L776.80 668.3L777.10 669.8L777.60 671.2L778.20 672.1L778.70 672.5L779.30 672.9L780.10 673.2L781.10 673.4L784.10 673.7L789.10 673.9L789.20 674.0L984.00 674.0" stroke="#7d3593" stroke-width="1.6"/>
<path d="M13.00 674.0L201.10 673.9L204.10 673.7L205.80 673.4L206.40 673.1L206.90 672.8L207.30 672.3L207.60 671.8L208.00 670.2L208.30 667.5L208.50 663.4L208.70 653.4L209.00 624.0L209.30 652.7L209.50 662.0L209.80 666.1L209.90 666.3L210.00 666.2L210.20 664.8L210.40 660.7L210.60 650.1L210.90 618.0L211.30 656.3L211.60 663.9L211.80 664.8L212.00 663.6L212.20 659.5L212.40 648.3L212.70 614.0L213.10 655.8L213.30 663.0L213.60 666.6L213.80 667.1L214.00 666.4L214.30 661.5L214.50 651.3L214.80 620.0L215.20 658.5L215.40 665.3L215.60 668.4L215.80 670.0L216.10 671.4L216.40 672.1L216.80 672.7L217.40 673.1L218.10 673.4L219.00 673.6L222.80 673.9L222.90 674.0L333.00 673.9L335.80 673.7L337.50 673.5L338.70 673.1L339.40 672.4L339.90 671.3L340.20 669.8L340.60 664.6L341.10 649.5L341.60 664.1L341.80 667.3L342.10 669.4L342.40 670.0L342.60 669.9L342.70 669.7L342.90 668.8L343.10 667.2L343.40 661.6L343.80 649.5L344.20 661.7L344.50 667.5L344.70 669.2L345.00 670.6L345.40 671.3L345.80 671.4L346.10 671.2L346.30 670.9L346.70 669.8L347.00 667.9L347.20 665.6L347.50 658.4L348.00 633.9L348.60 660.8L348.90 665.5L349.20 667.0L349.30 667.0L349.40 666.8L349.60 665.8L349.90 661.4L350.50 636.1L351.10 662.4L351.50 668.5L351.80 670.4L352.10 671.4L352.60 672.3L353.20 672.9L354.00 673.2L355.20 673.5L357.70 673.7L361.30 673.7L363.90 673.6L365.60 673.3L366.30 673.0L366.80 672.7L367.20 672.3L367.60 671.5L368.10 669.6L368.40 666.9L368.80 657.8L369.30 631.5L369.90 660.8L370.30 667.4L370.50 668.8L370.80 669.8L371.00 670.1L371.20 670.2L371.40 670.0L371.60 669.6L371.90 668.2L372.20 665.2L372.50 658.0L373.00 632.9L373.60 661.1L373.90 666.4L374.10 668.1L374.40 669.4L374.70 669.7L375.00 669.3L375.20 668.4L375.40 666.6L375.70 660.7L376.10 647.8L376.60 663.6L376.90 668.2L377.20 670.1L377.40 670.8L377.70 671.3L378.00 671.5L378.30 671.3L378.70 670.4L379.00 668.5L379.30 664.1L379.80 648.8L380.40 666.3L380.70 669.7L381.10 671.6L381.40 672.3L381.70 672.7L382.10 673.0L382.70 673.3L384.50 673.7L387.80 673.9L387.90 674.0L984.00 674.0" stroke="#7aa83a" stroke-width="1.6"/>
<path d="M13.00 674.0L124.80 673.9L125.80 673.8L127.10 673.6L128.00 673.3L128.60 672.9L129.10 672.2L129.40 671.5L129.70 670.2L130.40 664.8L130.60 664.0L130.80 664.8L131.50 670.2L131.80 671.5L132.20 672.4L132.70 673.0L133.50 673.4L134.60 673.7L136.40 673.9L136.50 674.0L205.20 673.8L206.80 673.5L207.30 673.3L207.70 673.0L208.20 672.2L208.80 670.3L209.00 670.0L209.20 670.3L209.80 672.0L210.10 672.5L210.60 672.8L210.90 672.7L211.20 672.6L211.50 672.2L211.80 671.5L212.50 668.4L212.70 668.0L212.90 668.5L213.40 670.9L213.80 672.2L214.30 673.0L215.00 673.4L216.60 673.7L219.70 673.9L219.80 674.0L226.60 673.8L228.30 673.6L229.50 673.3L230.30 672.9L230.90 672.3L231.30 671.3L231.60 670.1L232.30 664.7L232.50 664.0L232.70 664.7L233.30 669.5L233.58 670.8L233.90 671.7L234.40 672.4L235.00 672.7L235.80 672.7L236.50 672.3L237.10 671.3L237.50 669.8L237.80 667.8L238.30 662.9L238.50 662.0L238.70 662.9L239.30 668.6L239.60 670.3L239.90 671.3L240.30 672.1L240.90 672.7L241.70 673.0L242.60 673.0L243.50 672.8L244.20 672.4L244.70 671.7L245.10 670.8L245.40 669.6L245.70 667.6L246.30 661.0L246.50 660.0L246.70 660.9L247.30 667.1L247.60 668.9L247.90 669.8L248.20 670.2L248.40 670.2L248.60 670.1L248.90 669.5L249.30 668.0L249.60 665.8L250.30 655.5L250.52 654.0L250.70 655.2L251.20 662.2L251.50 664.4L251.60 664.7L251.70 664.8L251.80 664.7L252.35 662.1L252.43 662.0L252.52 662.0L253.40 669.1L253.70 670.5L254.10 671.6L254.80 672.5L255.80 673.1L257.30 673.4L259.60 673.6L261.80 673.6L263.40 673.4L264.50 673.1L265.20 672.5L265.70 671.7L266.10 670.4L266.80 665.7L267.00 665.0L267.20 665.6L267.80 669.4L268.10 670.4L268.40 670.9L268.60 670.9L268.80 670.8L269.10 670.1L269.96 666.0L270.07 666.1L270.20 666.5L270.80 669.5L271.00 670.0L271.30 670.2L271.50 670.0L271.70 669.5L272.30 666.5L272.50 666.0L272.70 666.5L273.20 669.3L273.60 670.4L273.70 670.5L273.90 670.5L274.20 670.0L274.80 667.4L275.00 667.0L275.20 667.5L275.80 670.8L276.10 671.7L276.40 672.3L276.80 672.8L277.40 673.1L278.10 673.4L279.00 673.5L280.20 673.5L281.10 673.3L281.80 673.0L282.30 672.4L282.60 671.9L282.90 670.9L283.60 666.6L283.82 666.0L284.00 666.6L284.73 671.0L285.10 672.1L285.50 672.8L286.10 673.2L286.90 673.5L288.20 673.7L290.30 673.9L290.40 674.0L344.30 673.9L345.80 673.6L346.30 673.4L346.70 673.1L347.20 672.3L347.80 670.3L348.00 670.0L348.20 670.3L348.80 672.3L349.30 673.1L350.10 673.6L351.70 673.9L351.80 674.0L369.32 673.9L370.40 673.7L371.30 673.4L371.90 672.8L372.30 672.0L372.80 670.3L373.00 670.0L373.20 670.3L373.80 672.3L374.30 673.1L375.10 673.6L376.70 673.9L376.80 674.0L453.90 673.9L455.70 673.6L456.30 673.4L456.70 673.1L457.00 672.8L457.30 672.2L457.90 670.3L458.10 670.0L458.30 670.3L459.00 672.4L459.60 673.1L460.20 673.4L461.10 673.5L462.00 673.4L462.70 673.0L463.30 672.3L463.70 671.3L464.00 670.0L464.50 666.6L464.70 666.0L464.90 666.6L465.60 671.0L466.00 672.2L466.40 672.8L467.00 673.3L467.90 673.6L469.40 673.8L471.90 673.9L472.00 674.0L473.20 673.9L475.40 673.8L476.80 673.6L477.80 673.4L478.50 672.9L479.00 672.2L479.40 671.0L480.10 666.6L480.30 666.0L480.50 666.6L481.00 670.0L481.30 671.3L481.70 672.3L482.30 673.0L482.90 673.3L483.80 673.5L484.70 673.5L485.40 673.2L485.80 672.9L486.10 672.4L486.80 670.3L487.00 670.0L487.20 670.3L487.80 672.2L488.10 672.8L488.40 673.2L489.20 673.6L491.20 673.9L491.30 674.0L755.00 673.8L757.70 673.7L759.40 673.5L760.50 673.0L761.20 672.4L761.70 671.5L762.10 670.0L762.80 664.8L763.00 664.0L763.20 664.5L763.80 668.3L764.00 668.9L764.10 669.0L764.30 669.0L764.50 668.6L764.70 667.7L765.30 662.7L765.48 662.0L765.70 662.9L766.40 669.2L766.70 670.6L767.00 671.4L767.60 672.3L768.30 672.7L768.80 672.7L769.30 672.7L770.10 672.3L770.50 671.8L770.90 671.0L771.40 669.0L771.80 665.8L772.30 659.2L772.50 658.0L772.70 659.0L773.30 665.8L773.60 667.4L773.70 667.6L773.90 667.8L774.20 667.0L774.80 662.6L774.90 662.1L775.02 662.0L775.20 663.0L775.70 667.8L776.00 669.8L776.40 671.3L776.90 672.3L777.70 673.0L778.80 673.4L780.70 673.7L783.90 673.9L784.00 674.0L984.00 674.0" stroke="#2f8cd8" stroke-width="1.4"/>
<path d="M127.5 674.6h6.5" stroke="#7aa83a" stroke-width="2"/>
<path d="M207 675.7H217M230 675.7H241M244 675.7H258M265 675.7H277M281 675.7H287M340 675.7H352M368 675.7H381M456 675.7H466M478 675.7H489M528 675.7H540M760 675.7H777" stroke="#3a90d8" stroke-width="1.5" stroke-dasharray="2.2 1.1" opacity="0.85"/>
<path d="M64.5 674V677.5" stroke="#1f6fb5" stroke-width="1.8"/>
<path d="M13.00 674.0L120.40 673.9L124.00 673.6L126.10 673.2L126.80 672.9L127.40 672.5L127.90 671.9L128.30 671.2L128.80 669.5L129.10 667.7L129.40 664.5L129.60 660.9L129.90 649.7L130.10 631.8L130.30 584.3L130.60 393.2L130.90 584.3L131.10 631.8L131.30 649.7L131.60 660.9L131.90 665.8L132.20 668.4L132.60 670.3L133.20 671.8L134.00 672.7L135.10 673.2L137.20 673.6L140.80 673.9L140.90 674.0L984.00 674.0" stroke="#5bbde9" stroke-width="2"/>
<path d="M130.6 396V660" stroke="#35678c" stroke-width="0.8" opacity="0.45"/>
</g>
<rect x="13" y="677" width="971" height="1" fill="#151515"/>
<rect x="63.9" y="678" width="1.2" height="3.7" fill="#2a2a2a"/>
<text x="63.9" y="694.5" text-anchor="middle" fill="#111" textLength="14.6" lengthAdjust="spacingAndGlyphs">4.8</text>
<rect x="157.1" y="678" width="1.2" height="3.7" fill="#2a2a2a"/>
<text x="157.1" y="694.5" text-anchor="middle" fill="#111" textLength="14.6" lengthAdjust="spacingAndGlyphs">4.3</text>
<rect x="250.3" y="678" width="1.2" height="3.7" fill="#2a2a2a"/>
<text x="250.3" y="694.5" text-anchor="middle" fill="#111" textLength="14.6" lengthAdjust="spacingAndGlyphs">3.8</text>
<rect x="343.4" y="678" width="1.2" height="3.7" fill="#2a2a2a"/>
<text x="343.4" y="694.5" text-anchor="middle" fill="#111" textLength="14.6" lengthAdjust="spacingAndGlyphs">3.3</text>
<rect x="436.6" y="678" width="1.2" height="3.7" fill="#2a2a2a"/>
<text x="436.6" y="694.5" text-anchor="middle" fill="#111" textLength="14.6" lengthAdjust="spacingAndGlyphs">2.8</text>
<rect x="529.8" y="678" width="1.2" height="3.7" fill="#2a2a2a"/>
<text x="529.8" y="694.5" text-anchor="middle" fill="#111" textLength="14.6" lengthAdjust="spacingAndGlyphs">2.3</text>
<rect x="623.0" y="678" width="1.2" height="3.7" fill="#2a2a2a"/>
<text x="623.0" y="694.5" text-anchor="middle" fill="#111" textLength="14.6" lengthAdjust="spacingAndGlyphs">1.8</text>
<rect x="716.2" y="678" width="1.2" height="3.7" fill="#2a2a2a"/>
<text x="716.2" y="694.5" text-anchor="middle" fill="#111" textLength="14.6" lengthAdjust="spacingAndGlyphs">1.3</text>
<rect x="809.3" y="678" width="1.2" height="3.7" fill="#2a2a2a"/>
<text x="809.3" y="694.5" text-anchor="middle" fill="#111" textLength="14.6" lengthAdjust="spacingAndGlyphs">0.8</text>
<rect x="902.5" y="678" width="1.2" height="3.7" fill="#2a2a2a"/>
<text x="902.5" y="694.5" text-anchor="middle" fill="#111" textLength="14.6" lengthAdjust="spacingAndGlyphs">0.3</text>
<text x="13" y="694.5" fill="#111" textLength="31.5" lengthAdjust="spacingAndGlyphs">[ppm]</text>
</svg>
<div style="position:absolute;left:984px;top:388px;width:2px;height:320px;background:#a3bad1;"></div>
<div style="position:absolute;left:986px;top:388px;width:4px;height:320px;background:linear-gradient(90deg,#d6e1ec,#e3eaf2);"></div>
<div style="position:absolute;left:990px;top:388px;width:1277px;height:0px;"></div>
<div style="position:absolute;left:990px;top:388px;width:277px;height:318px;box-sizing:border-box;border:1px solid #8da3c1;background:#fff;"></div>
<div style="position:absolute;left:991px;top:389px;width:275px;height:22px;background:linear-gradient(180deg,#f7f7f7,#f2f2f2 50%,#ececec);"></div>
<div style="position:absolute;left:991px;top:411px;width:275px;height:1px;background:#a8c0de;"></div>
<div style="position:absolute;left:1170px;top:389px;width:1px;height:22px;background:#a8bbd6;"></div>
<div style="position:absolute;left:1217px;top:389px;width:1px;height:22px;background:#a8bbd6;"></div>
<span class="t" style="left:996.60px;top:392.23px;font-size:12px;color:#111;transform:scaleX(0.9541);">Spectrum</span>
<span class="t" style="left:1176.90px;top:392.23px;font-size:12px;color:#111;transform:scaleX(0.9760);">Color</span>
<div style="position:absolute;left:1171px;top:412px;width:1px;height:293px;background:#f0f0f0;"></div>
<div style="position:absolute;left:1218px;top:412px;width:1px;height:293px;background:#f0f0f0;"></div>
<div style="position:absolute;left:991px;top:429px;width:275px;height:1px;background:#f1f1f1;"></div>
<div style="position:absolute;left:991px;top:447px;width:275px;height:1px;background:#f1f1f1;"></div>
<div style="position:absolute;left:991px;top:465px;width:275px;height:1px;background:#f1f1f1;"></div>
<div style="position:absolute;left:991px;top:483px;width:275px;height:1px;background:#f1f1f1;"></div>
<div style="position:absolute;left:991px;top:501px;width:275px;height:1px;background:#f1f1f1;"></div>
<div style="position:absolute;left:991px;top:519px;width:275px;height:1px;background:#f1f1f1;"></div>
<div style="position:absolute;left:991px;top:537px;width:275px;height:1px;background:#f1f1f1;"></div>
<div style="position:absolute;left:991px;top:555px;width:275px;height:1px;background:#f1f1f1;"></div>
<div style="position:absolute;left:991px;top:573px;width:275px;height:1px;background:#f1f1f1;"></div>
<div style="position:absolute;left:991px;top:591px;width:275px;height:1px;background:#f1f1f1;"></div>
<div style="position:absolute;left:991px;top:609px;width:275px;height:1px;background:#f1f1f1;"></div>
<div style="position:absolute;left:991px;top:627px;width:275px;height:1px;background:#f1f1f1;"></div>
<div style="position:absolute;left:991px;top:645px;width:275px;height:1px;background:#f1f1f1;"></div>
<div style="position:absolute;left:991px;top:663px;width:275px;height:1px;background:#f1f1f1;"></div>
<div style="position:absolute;left:991px;top:681px;width:275px;height:1px;background:#f1f1f1;"></div>
<div style="position:absolute;left:991px;top:699px;width:275px;height:1px;background:#f1f1f1;"></div>
<div style="position:absolute;left:994.7px;top:414.6px;width:12.5px;height:12.5px;border-radius:2.5px;background:#0a60c4;"><svg width="12.5" height="12.5" viewBox="0 0 12.5 12.5" style="position:absolute;left:0;top:0"><path d="M2.7 6.4l2.3 2 3.6-4.4" fill="none" stroke="#eef5fc" stroke-width="1"/></svg></div>
<span class="t" style="left:1011.70px;top:412.83px;font-size:12px;color:#111;transform:scaleX(0.8642);">m_avcp1_24_01_06</span>
<div style="position:absolute;left:1189px;top:414.6px;width:12.3px;height:12.5px;background:#000000;"></div>
<div style="position:absolute;left:994.7px;top:432.6px;width:12.5px;height:12.5px;border-radius:2.5px;background:#0a60c4;"><svg width="12.5" height="12.5" viewBox="0 0 12.5 12.5" style="position:absolute;left:0;top:0"><path d="M2.7 6.4l2.3 2 3.6-4.4" fill="none" stroke="#eef5fc" stroke-width="1"/></svg></div>
<span class="t" style="left:1011.70px;top:430.83px;font-size:12px;color:#111;transform:scaleX(0.9279);">residual</span>
<div style="position:absolute;left:1189px;top:432.6px;width:12.3px;height:12.5px;background:#1b72be;"></div>
<div style="position:absolute;left:994.7px;top:450.6px;width:12.5px;height:12.5px;border-radius:2.5px;background:#0a60c4;"><svg width="12.5" height="12.5" viewBox="0 0 12.5 12.5" style="position:absolute;left:0;top:0"><path d="M2.7 6.4l2.3 2 3.6-4.4" fill="none" stroke="#eef5fc" stroke-width="1"/></svg></div>
<span class="t" style="left:1011.70px;top:448.83px;font-size:12px;color:#111;transform:scaleX(0.9585);">Citric acid</span>
<div style="position:absolute;left:1189px;top:450.6px;width:12.3px;height:12.5px;background:#d6562b;"></div>
<div style="position:absolute;left:994.7px;top:468.6px;width:12.5px;height:12.5px;border-radius:2.5px;background:#0a60c4;"><svg width="12.5" height="12.5" viewBox="0 0 12.5 12.5" style="position:absolute;left:0;top:0"><path d="M2.7 6.4l2.3 2 3.6-4.4" fill="none" stroke="#eef5fc" stroke-width="1"/></svg></div>
<span class="t" style="left:1011.70px;top:466.83px;font-size:12px;color:#111;transform:scaleX(1.0125);">D-Manitol</span>
<div style="position:absolute;left:1189px;top:468.6px;width:12.3px;height:12.5px;background:#edb038;"></div>
<div style="position:absolute;left:994.7px;top:486.6px;width:12.5px;height:12.5px;border-radius:2.5px;background:#0a60c4;"><svg width="12.5" height="12.5" viewBox="0 0 12.5 12.5" style="position:absolute;left:0;top:0"><path d="M2.7 6.4l2.3 2 3.6-4.4" fill="none" stroke="#eef5fc" stroke-width="1"/></svg></div>
<span class="t" style="left:1011.70px;top:484.83px;font-size:12px;color:#111;transform:scaleX(0.9388);">L-Valine</span>
<div style="position:absolute;left:1189px;top:486.6px;width:12.3px;height:12.5px;background:#7d3593;"></div>
<div style="position:absolute;left:994.7px;top:504.6px;width:12.5px;height:12.5px;border-radius:2.5px;background:#0a60c4;"><svg width="12.5" height="12.5" viewBox="0 0 12.5 12.5" style="position:absolute;left:0;top:0"><path d="M2.7 6.4l2.3 2 3.6-4.4" fill="none" stroke="#eef5fc" stroke-width="1"/></svg></div>
<span class="t" style="left:1011.70px;top:502.83px;font-size:12px;color:#111;transform:scaleX(0.9508);">Phenyl Alanine</span>
<div style="position:absolute;left:1189px;top:504.6px;width:12.3px;height:12.5px;background:#7ba838;"></div>
<div style="position:absolute;left:994.7px;top:522.6px;width:12.5px;height:12.5px;border-radius:2.5px;background:#0a60c4;"><svg width="12.5" height="12.5" viewBox="0 0 12.5 12.5" style="position:absolute;left:0;top:0"><path d="M2.7 6.4l2.3 2 3.6-4.4" fill="none" stroke="#eef5fc" stroke-width="1"/></svg></div>
<span class="t" style="left:1011.70px;top:520.83px;font-size:12px;color:#111;transform:scaleX(0.9693);">Trigonellin-HCl</span>
<div style="position:absolute;left:1189px;top:522.6px;width:12.3px;height:12.5px;background:#52bbeb;"></div>
<div style="position:absolute;left:12px;top:706px;width:1257px;height:2px;background:#a3bdd4;"></div>
<div style="position:absolute;left:12px;top:705px;width:978px;height:1px;background:#9db6cf;"></div>
<div style="position:absolute;left:1267px;top:387px;width:2px;height:321px;background:linear-gradient(90deg,#a9bfd6,#bccfe0);"></div>
</body></html>
